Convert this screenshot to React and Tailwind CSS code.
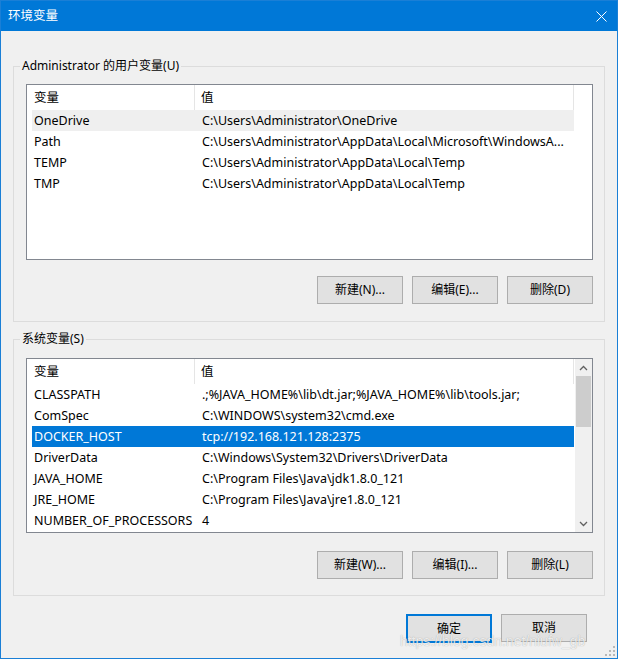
import React from "react";

const FONT = { fontFamily: '"Noto Sans", "Noto Sans CJK SC", sans-serif' };

const userVars = [
  ["OneDrive", "C:\\Users\\Administrator\\OneDrive"],
  ["Path", "C:\\Users\\Administrator\\AppData\\Local\\Microsoft\\WindowsA..."],
  ["TEMP", "C:\\Users\\Administrator\\AppData\\Local\\Temp"],
  ["TMP", "C:\\Users\\Administrator\\AppData\\Local\\Temp"],
];

const sysVars = [
  ["CLASSPATH", ".;%JAVA_HOME%\\lib\\dt.jar;%JAVA_HOME%\\lib\\tools.jar;"],
  ["ComSpec", "C:\\WINDOWS\\system32\\cmd.exe"],
  ["DOCKER_HOST", "tcp://192.168.121.128:2375"],
  ["DriverData", "C:\\Windows\\System32\\Drivers\\DriverData"],
  ["JAVA_HOME", "C:\\Program Files\\Java\\jdk1.8.0_121"],
  ["JRE_HOME", "C:\\Program Files\\Java\\jre1.8.0_121"],
  ["NUMBER_OF_PROCESSORS", "4"],
];

function Btn({ children, primary }) {
  return (
    <button
      className={
        primary
          ? "w-[86px] h-[29px] border-2 border-[#0078d7] bg-[#e1e1e1] text-[12px] text-black"
          : "w-[86px] h-[28px] border border-[#adadad] bg-[#e1e1e1] text-[12px] text-black"
      }
    >
      {children}
    </button>
  );
}

function VarList({ rows, selected, mode, scroll, height }) {
  return (
    <div
      className="flex border border-[#828790] bg-white"
      style={{ height }}
    >
      <div className="flex-1 pl-[5px]">
        {/* header */}
        <div className="flex h-[25px] w-[542px] items-center text-[12.5px] text-black">
          <div className="w-[163px] h-full flex items-center pl-[2px] pt-[1px] border-r border-[#e5e5e5]">
            变量
          </div>
          <div className="flex-1 h-full flex items-center pl-[6px] pt-[1px] border-r border-[#e5e5e5]">
            值
          </div>
        </div>
        {rows.map(([k, v], i) => {
          const sel = i === selected;
          const bg = sel ? (mode === "blue" ? "bg-[#0078d7] text-white" : "bg-[#efefef] text-black") : "text-black";
          return (
            <div key={k} className={"flex h-[21px] pt-[1px] w-[542px] items-center text-[12.5px] whitespace-nowrap " + bg}>
              <div className="w-[168px] pl-[2px]">{k}</div>
              <div className="flex-1 pl-[2px] overflow-hidden">{v}</div>
            </div>
          );
        })}
      </div>
      {scroll ? (
        <div className="w-[17px] bg-[#f0f0f0] flex flex-col">
          <div className="h-[17px] flex items-center justify-center">
            <svg width="9" height="6" viewBox="0 0 9 6">
              <polyline points="1,5 4.5,1.5 8,5" fill="none" stroke="#606060" strokeWidth="1.3" />
            </svg>
          </div>
          <div className="h-[51px] mx-[1px] bg-[#cdcdcd]" />
          <div className="flex-1" />
          <div className="h-[17px] flex items-center justify-center">
            <svg width="9" height="6" viewBox="0 0 9 6">
              <polyline points="1,1 4.5,4.5 8,1" fill="none" stroke="#606060" strokeWidth="1.3" />
            </svg>
          </div>
        </div>
      ) : (
        <div className="w-[18px]" />
      )}
    </div>
  );
}

function Group({ label, children, className }) {
  return (
    <div className={"relative border border-[#dcdcdc] " + className}>
      <span className="absolute -top-[9px] left-[6px] px-[2px] bg-[#f0f0f0] text-[12px] text-black leading-[16px]">
        {label}
      </span>
      {children}
    </div>
  );
}

export default function App() {
  return (
    <div
      className="relative w-[618px] h-[659px] border border-[#1a7fd6] bg-[#f0f0f0] flex flex-col"
      style={FONT}
    >
      {/* title bar */}
      <div className="h-[30px] bg-[#0078d7] flex items-center justify-between pl-[7px] pr-[10px]">
        <span className="text-white text-[12.5px]">环境变量</span>
        <svg width="11" height="11" viewBox="0 0 11 11">
          <path d="M0.5 0.5 L10.5 10.5 M10.5 0.5 L0.5 10.5" stroke="#ffffff" strokeWidth="1" />
        </svg>
      </div>

      <div className="px-[12px]">
        <Group label="Administrator 的用户变量(U)" className="mt-[35px] h-[256px] pl-[12px] pr-[11px] pt-[17px]">
          <VarList rows={userVars} selected={0} mode="gray" height={176} />
          <div className="flex justify-end gap-[9px] mt-[16px]">
            <Btn>新建(N)...</Btn>
            <Btn>编辑(E)...</Btn>
            <Btn>删除(D)</Btn>
          </div>
        </Group>

        <Group label="系统变量(S)" className="mt-[17px] h-[257px] pl-[12px] pr-[11px] pt-[18px]">
          <VarList rows={sysVars} selected={2} mode="blue" scroll height={175} />
          <div className="flex justify-end gap-[9px] mt-[18px]">
            <Btn>新建(W)...</Btn>
            <Btn>编辑(I)...</Btn>
            <Btn>删除(L)</Btn>
          </div>
        </Group>

        <div className="flex justify-end gap-[9px] mt-[18px] pr-[18px]">
          <Btn primary>确定</Btn>
          <Btn>取消</Btn>
        </div>
      </div>

      {/* watermark */}
      <span
        className="absolute left-[399px] top-[630px] text-[14px] text-white/80 whitespace-nowrap"
        style={{ fontFamily: '"Liberation Sans", sans-serif', textShadow: "0 0 1px rgba(0,0,0,0.35)" }}
      >
        https://blog.csdn.net/niufw_gb
      </span>

      {/* resize grip */}
      <svg className="absolute right-[2px] bottom-[2px]" width="10" height="10" viewBox="0 0 10 10">
        <rect x="8" y="0" width="2" height="2" fill="#b8b8b8" />
        <rect x="4" y="4" width="2" height="2" fill="#b8b8b8" />
        <rect x="8" y="4" width="2" height="2" fill="#b8b8b8" />
        <rect x="0" y="8" width="2" height="2" fill="#b8b8b8" />
        <rect x="4" y="8" width="2" height="2" fill="#b8b8b8" />
        <rect x="8" y="8" width="2" height="2" fill="#b8b8b8" />
      </svg>
    </div>
  );
}
